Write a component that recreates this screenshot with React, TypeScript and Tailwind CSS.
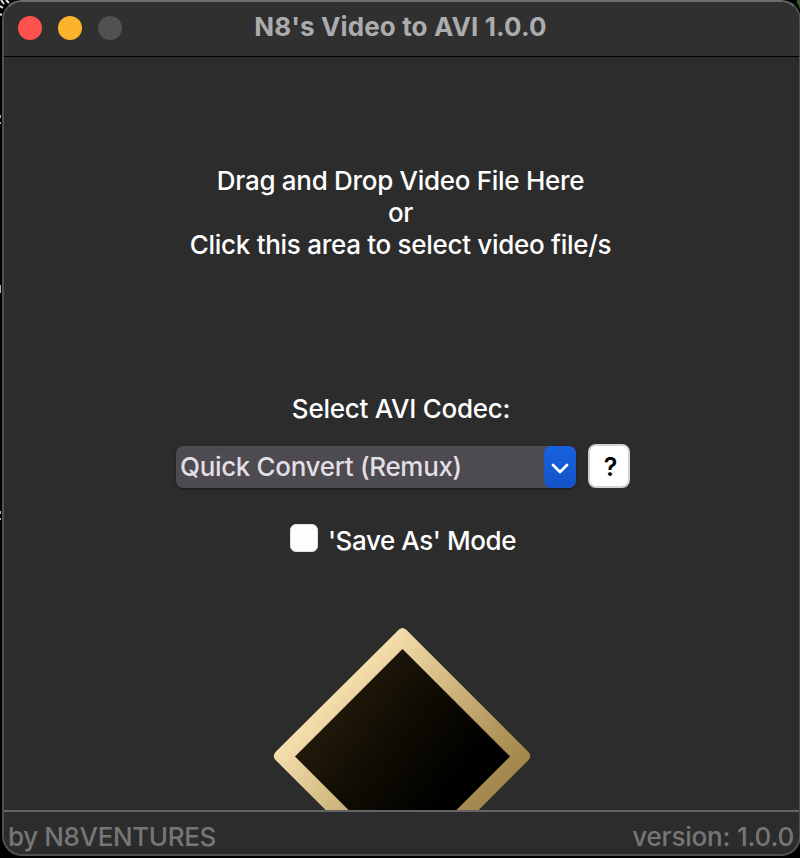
import React from "react";

function TitleBar() {
  return (
    <header className="relative flex h-[55px] shrink-0 items-center justify-center border-b border-black bg-[#303031]">
      <div className="absolute left-[14px] top-[14px] flex gap-4">
        <span className="size-6 rounded-full bg-[#ff514d]" />
        <span className="size-6 rounded-full bg-[#fdb32b]" />
        <span className="size-6 rounded-full bg-[#515153]" />
      </div>
      <h1 className="mr-[2px] mb-[4px] whitespace-nowrap text-[26px] leading-8 font-bold tracking-[0.13px] text-[#acacae]">
        N8's Video to AVI 1.0.0
      </h1>
    </header>
  );
}

function CodecSelect() {
  return (
    <button className="flex h-[42px] w-[400px] items-stretch overflow-hidden rounded-[7px] bg-[#4d4a50] text-left shadow-[0_1px_2px_rgba(0,0,0,0.5)]">
      <span className="flex-1 whitespace-nowrap pl-[4px] text-[26px] leading-[42px] tracking-[-0.34px] text-[#e2dfe5]">
        Quick Convert (Remux)
      </span>
      <span className="flex w-8 items-center justify-center rounded-[7px] bg-linear-to-b from-[#1762e2] to-[#1453c5]">
        <svg width="18" height="12" viewBox="0 0 18 12" fill="none" className="mt-[3px]">
          <path d="M2 2L9 9L16 2" stroke="white" strokeWidth="2.8" strokeLinecap="round" strokeLinejoin="round" />
        </svg>
      </span>
    </button>
  );
}

function DiamondLogo() {
  return (
    <svg width="258" height="184" viewBox="273 626 258 184" className="block">
      <defs>
        <linearGradient id="gold" gradientUnits="userSpaceOnUse" x1="325" y1="675" x2="485" y2="830">
          <stop offset="0" stopColor="#ffe8b8" />
          <stop offset="0.35" stopColor="#d9c18a" />
          <stop offset="0.7" stopColor="#b59a60" />
          <stop offset="1" stopColor="#9a8044" />
        </linearGradient>
        <linearGradient id="dark" gradientUnits="userSpaceOnUse" x1="330" y1="700" x2="450" y2="790">
          <stop offset="0" stopColor="#231a0b" />
          <stop offset="0.5" stopColor="#100c03" />
          <stop offset="1" stopColor="#000000" />
        </linearGradient>
      </defs>
      <path
        d="M399 629.5Q402.500 626.500 406 629.500L528.500 752Q532 756.500 528.500 760L406 883Q402.500 886 399 883L275.500 760Q272 756.500 275.500 752Z"
        fill="url(#gold)"
      />
      <path d="M402.500 649L510 756.500L402.500 864L295 756.500Z" fill="url(#dark)" />
    </svg>
  );
}

/* Slivers of the desktop that stay visible around the window. */
function DesktopEdges() {
  return (
    <svg width="800" height="858" className="absolute inset-0">
      <path d="M1 0L4 4M6 0L9 3M0 6L3 8M0 15L2 14" stroke="#e4e4e4" strokeWidth="2" />
      <path d="M797 0H800V10Q799 5 797 3Z" fill="#3d5a26" />
      <path d="M0 115h1v3h-1zM0 122h1v2h-1zM0 285h1v8h-1zM0 511h1v3h-1zM0 518h1v2h-1z" fill="#b4b4b4" />
    </svg>
  );
}

export default function App() {
  return (
    <div className="relative h-[858px] w-[800px] overflow-hidden bg-black pl-[2px] font-['Inter','Liberation_Sans',sans-serif]">
      <DesktopEdges />
      <div className="relative flex h-[856px] w-[799px] flex-col overflow-hidden rounded-[20px] border-2 border-[#505051] border-t-[#6d6d6e] bg-[#2c2c2c]">
        <TitleBar />
        <main className="flex h-[753px] shrink-0 flex-col items-center pr-[2px] text-[26px] font-[450] text-white">
          <div className="mt-[108px] flex flex-col items-center whitespace-nowrap leading-8 tracking-[-0.3px]">
            <p>Drag and Drop Video File Here</p>
            <p>or</p>
            <p>Click this area to select video file/s</p>
          </div>
          <p className="mt-[132px] pl-px whitespace-nowrap leading-8 tracking-[-0.26px]">Select AVI Codec:</p>
          <div className="mt-[19px] flex items-center gap-3 pl-[5px]">
            <CodecSelect />
            <button className="mb-[2px] h-11 w-[42px] rounded-[8px] border-2 border-[#d2d2d3] bg-white pt-px pl-[3px] text-[25px] leading-10 font-semibold text-black">
              ?
            </button>
          </div>
          <label className="mt-[34px] flex items-center pl-[5px] whitespace-nowrap leading-8 tracking-[-0.42px]">
            <span className="mr-[10px] mb-[6px] size-7 rounded-[6px] border border-[#dedede] bg-[#fdfdfd]" />
            'Save As' Mode
          </label>
          <div className="mt-auto pl-[3px]">
            <DiamondLogo />
          </div>
        </main>
        <footer className="flex flex-1 items-center justify-between whitespace-nowrap border-t-2 border-[#636363] pt-[7px] pr-[5px] pl-[4px] text-[26px] leading-8 font-[450] text-[#767676]">
          <span className="tracking-[-0.38px]">by N8VENTURES</span>
          <span className="tracking-[-0.2px]">version: 1.0.0</span>
        </footer>
      </div>
    </div>
  );
}
